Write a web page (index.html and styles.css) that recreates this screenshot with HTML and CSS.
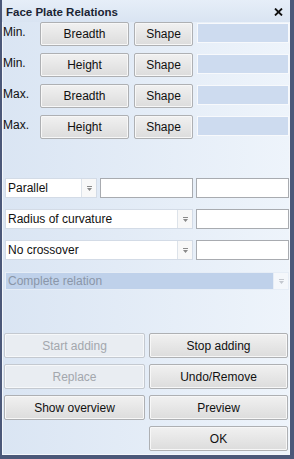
FILE: index.html
```html
<!DOCTYPE html>
<html>
<head>
    <title>Face Plate Relations</title>
    <link rel="stylesheet" href="styles.css">
</head>
<body>
    <div class="window">
        <div class="titlebar">
            <span class="title">Face Plate Relations</span>
            <svg class="close" width="9" height="8" viewBox="0 0 9 8">
                <path d="M1 0.5 L8 7.5 M8 0.5 L1 7.5" stroke="#111" stroke-width="1.8"/>
            </svg>
        </div>

        <div class="limits">
            <div class="limit-row">
                <span class="lbl">Min.</span>
                <button class="btn wide">Breadth</button>
                <button class="btn shape">Shape</button>
                <div class="field"></div>
            </div>
            <div class="limit-row">
                <span class="lbl">Min.</span>
                <button class="btn wide">Height</button>
                <button class="btn shape">Shape</button>
                <div class="field"></div>
            </div>
            <div class="limit-row">
                <span class="lbl">Max.</span>
                <button class="btn wide">Breadth</button>
                <button class="btn shape">Shape</button>
                <div class="field"></div>
            </div>
            <div class="limit-row">
                <span class="lbl">Max.</span>
                <button class="btn wide">Height</button>
                <button class="btn shape">Shape</button>
                <div class="field"></div>
            </div>
        </div>

        <div class="relations">
            <div class="rel-row">
                <div class="combo c-short">
                    <span class="combo-text">Parallel</span>
                    <span class="combo-arrow"><svg width="5" height="5" viewBox="0 0 5 5"><path d="M0 0H5V1H0Z M0 2H5L2.5 5Z" fill="#8a8a8a"/></svg></span>
                </div>
                <input class="tbox" type="text">
                <input class="tbox" type="text">
            </div>
            <div class="rel-row">
                <div class="combo c-long">
                    <span class="combo-text">Radius of curvature</span>
                    <span class="combo-arrow"><svg width="5" height="5" viewBox="0 0 5 5"><path d="M0 0H5V1H0Z M0 2H5L2.5 5Z" fill="#8a8a8a"/></svg></span>
                </div>
                <input class="tbox" type="text">
            </div>
            <div class="rel-row">
                <div class="combo c-long">
                    <span class="combo-text">No crossover</span>
                    <span class="combo-arrow"><svg width="5" height="5" viewBox="0 0 5 5"><path d="M0 0H5V1H0Z M0 2H5L2.5 5Z" fill="#8a8a8a"/></svg></span>
                </div>
                <input class="tbox" type="text">
            </div>
            <div class="rel-row">
                <div class="combo c-full disabled">
                    <span class="combo-text">Complete relation</span>
                    <span class="combo-arrow"><svg width="5" height="5" viewBox="0 0 5 5"><path d="M0 0H5V1H0Z M0 2H5L2.5 5Z" fill="#c4c8cf"/></svg></span>
                </div>
            </div>
        </div>

        <div class="actions">
            <button class="btn act" disabled>Start adding</button>
            <button class="btn act">Stop adding</button>
            <button class="btn act" disabled>Replace</button>
            <button class="btn act">Undo/Remove</button>
            <button class="btn act">Show overview</button>
            <button class="btn act">Preview</button>
            <span></span>
            <button class="btn act">OK</button>
        </div>
    </div>
</body>
</html>
```

FILE: styles.css
```css
body {
    margin: 0;
    font-family: "Liberation Sans", Arial, sans-serif;
    font-size: 12px;
    color: #111;
}
.window {
    box-sizing: border-box;
    width: 294px;
    height: 459px;
    border-left: 2px solid #4b5879;
    border-right: 4px solid #4b5879;
    border-bottom: 4px solid #4b5879;
    background: linear-gradient(to right, #dae5f3, #eef4fb);
    box-shadow: inset 1px 0 0 #f4f7fb, inset -1px 0 0 #f4f7fb, inset 0 -1px 0 #f4f7fb;
}
.titlebar {
    height: 22px;
    display: flex;
    align-items: center;
    justify-content: space-between;
    padding: 0 4px 0 4px;
    background: linear-gradient(to bottom, #e6eef8, #d9e4f2);
}
.title {
    font-weight: bold;
    font-size: 11.5px;
    color: #1b2433;
    margin-top: 1px;
}
.close {
    margin-right: 3px;
    margin-top: 1px;
}
.limits {
    display: flex;
    flex-direction: column;
    gap: 7px;
}
.limit-row {
    display: flex;
    height: 24px;
}
.lbl {
    width: 38px;
    padding-left: 1px;
    box-sizing: border-box;
    line-height: 12px;
    margin-top: 4px;
}
.btn {
    font-family: "Liberation Sans", Arial, sans-serif;
    font-size: 12px;
    color: #111;
    height: 24px;
    padding: 0;
    border: 1px solid #aeb0b3;
    border-radius: 2px;
    background: linear-gradient(to bottom, #f1f1f1, #dcdcdc);
    box-shadow: inset 0 0 0 1px #f7f7f7;
}
.btn:disabled {
    color: #a3a7ad;
    border-color: #c4c9d0;
    background: #e9edf2;
    box-shadow: inset 0 0 0 1px #f6f8fa;
}
.wide {
    width: 89px;
}
.shape {
    width: 59px;
    margin-left: 5px;
}
.field {
    width: 92px;
    height: 20px;
    margin: 1px 0 0 4px;
    box-sizing: border-box;
    background: #cddbef;
    border: 1px solid #f7f9fc;
}
.relations {
    margin-top: 39px;
    padding-left: 3px;
    display: flex;
    flex-direction: column;
    gap: 11px;
}
.rel-row {
    display: flex;
    gap: 3px;
    height: 20px;
}
.combo {
    box-sizing: border-box;
    height: 20px;
    display: flex;
    background: #fff;
    border: 1px solid #d3dbe6;
}
.combo-text {
    flex: 1;
    padding-left: 2px;
    line-height: 18px;
    font-size: 12px;
}
.combo-arrow {
    width: 14px;
    border-left: 1px solid #dde3ea;
    background: #f8f8f8;
    display: flex;
    align-items: center;
    justify-content: center;
}
.c-short {
    width: 92px;
}
.c-long {
    width: 188px;
}
.c-full {
    width: 284px;
}
.combo.disabled {
    height: 18px;
    margin-top: 1px;
    border: 1px solid #e6edf6;
    background: #bfd1ea;
    color: #8a96a8;
}
.combo.disabled .combo-text {
    line-height: 16px;
}
.combo.disabled .combo-arrow {
    background: #f4f7fb;
    border-left: 1px solid #e6edf6;
}
.tbox {
    box-sizing: border-box;
    width: 93px;
    height: 20px;
    margin: 0;
    border: 1px solid #a8abb0;
    background: #fff;
    padding: 0;
}
.actions {
    margin-top: 42px;
    padding: 0 4px 0 2px;
    display: grid;
    grid-template-columns: 141px 139px;
    column-gap: 4px;
    row-gap: 6px;
}
.act {
    height: 25px;
    width: 100%;
}
```
